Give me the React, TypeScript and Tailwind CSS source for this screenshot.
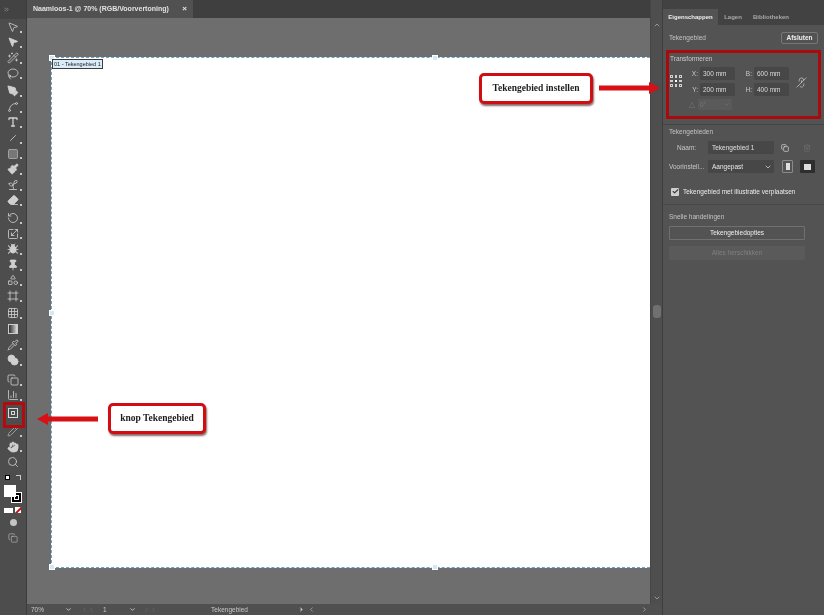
import {
  ChevronDown,
  ChevronLeft,
  ChevronRight,
  ChevronUp,
  ChevronsRight,
  Link2Off,
  Trash2,
  Check,
  Hand,
  Search,
  PenTool,
  Pipette,
  Type,
  Wand2,
  Paintbrush,
  Eraser,
  RotateCcw,
  Pin,
  Minus,
  Lasso,
  Scaling,
  BarChart3,
  Copy,
  Square,
  Grid3x3,
  Pencil,
  Spline,
  MousePointer2,
  Frame,
  Shapes,
  Blend,
  Sprout,
  Bug,
} from "lucide-react";

const font = "font-['Liberation_Sans',sans-serif]";

// fill = tools drawn solid in the picture
const toolGroups = [
  [
    { icon: MousePointer2 },
    { icon: MousePointer2, fill: true },
    { icon: Wand2 },
    { icon: Lasso },
  ],
  [
    { icon: PenTool, fill: true },
    { icon: Spline },
    { icon: Type, bold: true },
    { icon: Minus, rotate: true },
    { icon: Square, fill: true, dim: true },
    { icon: Paintbrush, fill: true },
    { icon: Sprout },
    { icon: Eraser, fill: true },
  ],
  [
    { icon: RotateCcw },
    { icon: Scaling },
    { icon: Bug, fill: true },
    { icon: Pin, fill: true },
    { icon: Shapes },
    { icon: Frame },
  ],
];

function ToolIcon({ icon: Icon, fill, rotate, bold, dim }: any) {
  return (
    <div className="h-[15.6px] flex items-center justify-center relative">
      <Icon
        className={rotate ? "w-[12px] h-[12px] text-[#d0d0d0] -rotate-45" : dim ? "w-[12px] h-[12px] text-[#b0b0b0]" : "w-[12px] h-[12px] text-[#d0d0d0]"}
        strokeWidth={bold ? 2.6 : 1.6}
        fill={fill ? (dim ? "#777777" : "currentColor") : "none"}
      />
      <div className="absolute right-[4px] bottom-[2px] w-[2px] h-[2px] bg-[#c8c8c8]" />
    </div>
  );
}

function Toolbar() {
  return (
    <div className="w-[27px] shrink-0 bg-[#4d4d4d] border-r border-[#3c3c3c] flex flex-col relative">
      <div className="h-[19px] bg-[#434343] flex items-center pl-[3px]">
        <ChevronsRight className="w-[7px] h-[7px] text-[#aaaaaa]" />
      </div>
      {toolGroups.map((group, i) => (
        <div key={i} className="flex flex-col mb-[2px]">
          {group.map((tool, j) => (
            <ToolIcon key={j} {...tool} />
          ))}
        </div>
      ))}
      <div className="flex flex-col mb-[4px]">
        <ToolIcon icon={Grid3x3} />
        <div className="h-[15.6px] flex items-center justify-center">
          <div className="w-[10px] h-[10px] bg-gradient-to-r from-[#333333] to-[#dddddd] border border-[#cccccc]" />
        </div>
        <ToolIcon icon={Pipette} />
        <ToolIcon icon={Blend} fill />
      </div>
      <div className="flex flex-col">
        <ToolIcon icon={Copy} />
        <ToolIcon icon={BarChart3} />
        <div className="h-[20px] flex items-center justify-center">
          <div className="w-[10px] h-[10px] border border-[#d8d8d8] relative">
            <div className="absolute left-[2px] top-[2px] w-[4px] h-[4px] border border-[#d8d8d8]" />
          </div>
        </div>
        <ToolIcon icon={Pencil} dim />
        <ToolIcon icon={Hand} fill />
        <div className="h-[15.6px] flex items-center justify-center">
          <Search className="w-[12px] h-[12px] text-[#d0d0d0]" strokeWidth={1.6} />
        </div>
      </div>
      {/* colours */}
      <div className="flex justify-between px-[5px] mt-[3px] h-[9px] items-center">
        <div className="w-[5px] h-[5px] bg-white border border-black" />
        <div className="w-[5px] h-[5px] border-t border-r border-[#ccc]" />
      </div>
      <div className="relative h-[20px] mt-[3px] ml-[4px]">
        <div className="absolute left-[7px] top-[7px] w-[11px] h-[11px] bg-black border border-white p-[2px]">
          <div className="w-full h-full border border-white" />
        </div>
        <div className="absolute left-0 top-0 w-[12px] h-[12px] bg-white" />
      </div>
      <div className="flex gap-[2px] ml-[4px] mt-[2px] items-center h-[6px]">
        <div className="w-[9px] h-[5px] bg-white" />
        <div className="w-[6px] h-[6px] bg-white relative overflow-hidden">
          <div className="absolute left-[-2px] top-[2.5px] w-[10px] h-[1.5px] bg-[#d01010] -rotate-45" />
        </div>
      </div>
      <div className="flex justify-center mt-[6px]">
        <div className="w-[7px] h-[7px] rounded-full bg-[#c4c4c4]" />
      </div>
      <div className="flex justify-center mt-[7px]">
        <Copy className="w-[12px] h-[10px] text-[#c4c4c4]" strokeWidth={1.4} />
      </div>
    </div>
  );
}

function Handle({ className }: { className: string }) {
  return <div className={`absolute w-[6px] h-[6px] bg-[#d4e9f8] border border-white ${className}`} />;
}

function Callout({ text, className }: { text: string; className: string }) {
  return (
    <div
      className={`absolute bg-white border-[3px] border-[#d00d12] rounded-[5px] shadow-[1px_2px_2px_rgba(60,0,0,0.6)] flex items-center justify-center font-['Liberation_Serif',serif] font-bold text-[9.5px] text-[#1c1c1c] ${className}`}
    >
      {text}
    </div>
  );
}

function Arrow({ className, left }: { className: string; left?: boolean }) {
  return (
    <svg viewBox="0 0 62 12" className={`absolute ${className}`}>
      <path
        d={left ? "M0 6 L11 0 L11 3.5 L61 3.5 L61 8.5 L11 8.5 L11 12 Z" : "M62 6 L51 0 L51 3.5 L1 3.5 L1 8.5 L51 8.5 L51 12 Z"}
        fill="#d80f14"
      />
    </svg>
  );
}

function Field({ label, value }: { label: string; value: string }) {
  return (
    <div className="flex items-center w-[54px]">
      <span className="w-[19px] pr-[2px] text-right text-[6.5px] text-[#c8c8c8]">{label}</span>
      <div className="w-[35px] h-[13px] bg-[#474747] rounded-[1px] text-[6.5px] text-[#dcdcdc] pl-[3px] leading-[13px] shrink-0">{value}</div>
    </div>
  );
}

function PropertiesPanel() {
  return (
    <div className={`w-[162px] shrink-0 bg-[#535353] border-l border-[#3e3e3e] flex flex-col text-[6.5px] text-[#d0d0d0] ${font}`}>
      <div className="h-[25px] bg-[#424242] pt-[9px] flex items-stretch font-bold text-[6px]">
        <div className="w-[55px] bg-[#535353] text-[#eeeeee] flex items-center justify-center">Eigenschappen</div>
        <div className="w-[30px] text-[#a8a8a8] flex items-center justify-center">Lagen</div>
        <div className="w-[46px] text-[#a8a8a8] flex items-center justify-center">Bibliotheken</div>
      </div>
      <div className="flex items-center justify-between pl-[6px] pr-[6px] h-[25px] text-[#c4c4c4]">
        <span>Tekengebied</span>
        <div className="w-[37px] h-[12px] border border-[#777] rounded-[2px] flex items-center justify-center font-bold text-[#f0f0f0]">Afsluten</div>
      </div>
      {/* Transformeren */}
      <div className="h-[69px] pt-[4px] pl-[7px] relative">
        <div className="text-[#cccccc] leading-[9px]">Transformeren</div>
        <div className="flex">
          <div className="grid grid-cols-3 gap-[2px] w-[12px] h-[12px] mt-[12px] shrink-0">
            {[0, 1, 2, 3, 4, 5, 6, 7, 8].map((n) => (
              <div key={n} className={n === 4 ? "bg-white" : "border border-[#cfcfcf]"} />
            ))}
          </div>
          <div className="flex flex-col gap-[3px] -ml-[1px] mt-[4px]">
            <div className="flex">
              <Field label="X:" value="300 mm" />
              <Field label="B:" value="600 mm" />
            </div>
            <div className="flex">
              <Field label="Y:" value="200 mm" />
              <Field label="H:" value="400 mm" />
            </div>
          </div>
          <Link2Off className="w-[11px] h-[13px] ml-[7px] mt-[13px] text-[#d8d8d8] rotate-90" strokeWidth={1.4} />
        </div>
        <div className="flex items-center mt-[3px] ml-[19px] text-[#777]">
          <span className="text-[8px] leading-[9px]">△</span>
          <span className="ml-[3px] w-[34px] h-[11px] bg-[#5a5a5a] rounded-[1px] flex items-center justify-between px-[2px]">
            0°
            <ChevronDown className="w-[7px] h-[7px]" />
          </span>
        </div>
      </div>
      <div className="h-px bg-[#444] mt-[5px]" />
      {/* Tekengebieden */}
      <div className="pl-[6px] pt-[2px]">
        <div className="h-[10px] leading-[10px] text-[#c4c4c4]">Tekengebieden</div>
        <div className="flex items-center mt-[4px] h-[13px]">
          <span className="w-[39px] pl-[8px] text-[#c8c8c8]">Naam:</span>
          <div className="w-[66px] h-[13px] bg-[#474747] rounded-[1px] pl-[4px] leading-[13px] text-[#e0e0e0]">Tekengebied 1</div>
          <Copy className="w-[8px] h-[8px] ml-[7px] text-[#e0e0e0]" strokeWidth={2} />
          <Trash2 className="w-[8px] h-[8px] ml-[14px] text-[#707070]" />
        </div>
        <div className="flex items-center mt-[6px] h-[13px]">
          <span className="w-[39px] text-[#c8c8c8]">Voorinstell...</span>
          <div className="w-[66px] h-[13px] bg-[#474747] rounded-[1px] pl-[4px] pr-[2px] flex items-center justify-between text-[#e8e8e8]">
            Aangepast
            <ChevronDown className="w-[8px] h-[8px]" />
          </div>
          <div className="w-[11px] h-[13px] ml-[8px] border border-[#8a8a8a] rounded-[1px] flex items-center justify-center">
            <div className="w-[4px] h-[7px] bg-[#dddddd]" />
          </div>
          <div className="w-[15px] h-[13px] ml-[7px] bg-[#2e2e2e] rounded-[1px] flex items-center justify-center">
            <div className="w-[7px] h-[6px] bg-[#dddddd]" />
          </div>
        </div>
        <div className="flex items-center mt-[14px] ml-[2px] h-[9px]">
          <div className="w-[8px] h-[8px] bg-[#cfcfcf] rounded-[1px] flex items-center justify-center">
            <Check className="w-[7px] h-[7px] text-[#3a3a3a]" strokeWidth={4} />
          </div>
          <span className="ml-[4px] text-[#ececec]">Tekengebied met illustratie verplaatsen</span>
        </div>
      </div>
      <div className="h-px bg-[#484848] mt-[8px]" />
      {/* Snelle handelingen */}
      <div className="pl-[6px] pt-[7px]">
        <div className="h-[9px] leading-[9px] text-[#c4c4c4]">Snelle handelingen</div>
        <div className="w-[136px] h-[14px] mt-[5px] border border-[#707070] rounded-[1px] flex items-center justify-center text-[#f0f0f0]">Tekengebiedopties</div>
        <div className="w-[136px] h-[14px] mt-[6px] bg-[#5a5a5a] rounded-[1px] flex items-center justify-center text-[#808080]">Alles herschikken</div>
      </div>
    </div>
  );
}

export default function App() {
  return (
    <div className={`w-[824px] h-[615px] flex overflow-hidden relative bg-[#535353] blur-[0.3px] ${font}`}>
      <Toolbar />
      <div className="flex-1 flex flex-col min-w-0">
        <div className="flex-1 flex min-h-0">
          <div className="flex-1 flex flex-col min-w-0">
            <div className="h-[18px] bg-[#3f3f3f] flex items-stretch">
              <div className="w-[166px] bg-[#515151] flex items-center pl-[6px] text-[7px] font-bold text-[#e2e2e2] whitespace-nowrap">
                Naamloos-1 @ 70% (RGB/Voorvertoning)
                <span className="ml-auto mr-[6px] text-[8px] text-[#e6e6e6]">×</span>
              </div>
            </div>
            {/* canvas */}
            <div className="flex-1 bg-[#6e6e6e] pl-[24px] pt-[39px] min-h-0 overflow-hidden">
              <div className="relative h-[511px] bg-white border-l border-t border-b border-dashed border-[#6aa5c8]">
                <Handle className="-left-[3px] -top-[3px]" />
                <Handle className="left-[380px] -top-[3px]" />
                <Handle className="-left-[3px] top-[252px]" />
                <Handle className="-left-[3px] -bottom-[3px]" />
                <Handle className="left-[380px] -bottom-[3px]" />
                <div className="absolute left-0 top-[1px] bg-[#d9ecf8] border border-[#3d3d3d] px-[1px] text-[5.5px] leading-[8px] text-[#222] whitespace-nowrap">
                  01 - Tekengebied 1
                </div>
              </div>
            </div>
          </div>
          {/* vertical scrollbar */}
          <div className="w-[12px] bg-[#4e4e4e] border-l border-[#454545] flex flex-col items-center pt-[21px] pb-[2px]">
            <ChevronUp className="w-[8px] h-[8px] text-[#bbbbbb]" />
            <div className="w-[8px] h-[13px] mt-[276px] rounded-[3px] bg-[#707070]" />
            <ChevronDown className="w-[8px] h-[8px] mt-auto text-[#bbbbbb]" />
          </div>
        </div>
        {/* status bar */}
        <div className="h-[11px] bg-[#505050] flex items-center text-[6.5px] text-[#c8c8c8] shrink-0">
          <span className="ml-[4px] w-[32px]">70%</span>
          <ChevronDown className="w-[7px] h-[7px] ml-[2px]" strokeWidth={3} />
          <div className="w-[31px] flex justify-center text-[#6e6e6e]">
            <ChevronLeft className="w-[7px] h-[7px]" />
            <ChevronLeft className="w-[7px] h-[7px]" />
          </div>
          <span className="w-[26px]">1</span>
          <ChevronDown className="w-[7px] h-[7px]" strokeWidth={3} />
          <div className="w-[28px] flex justify-center text-[#6e6e6e]">
            <ChevronRight className="w-[7px] h-[7px]" />
            <ChevronRight className="w-[7px] h-[7px]" />
          </div>
          <span className="ml-[28px] w-[75px] text-center">Tekengebied</span>
          <ChevronRight className="w-[7px] h-[7px] ml-[31px]" fill="#c8c8c8" />
          <ChevronLeft className="w-[7px] h-[7px] ml-[3px]" />
          <div className="ml-auto mr-[14px]">
            <ChevronRight className="w-[7px] h-[7px]" />
          </div>
        </div>
      </div>
      <PropertiesPanel />

      {/* annotations */}
      <div className="absolute left-[666px] top-[50px] w-[155px] h-[69px] border-[3px] border-[#a80a0e]" />
      <div className="absolute left-[3px] top-[402px] w-[22px] h-[26px] border-[3px] border-[#b20a0e]" />
      <Callout text="Tekengebied instellen" className="left-[479px] top-[73px] w-[114px] h-[31px]" />
      <Callout text="knop Tekengebied" className="left-[108px] top-[403px] w-[98px] h-[31px]" />
      <Arrow className="left-[598px] top-[82px] w-[62px] h-[12px]" />
      <Arrow left className="left-[37px] top-[413px] w-[62px] h-[12px]" />
    </div>
  );
}
